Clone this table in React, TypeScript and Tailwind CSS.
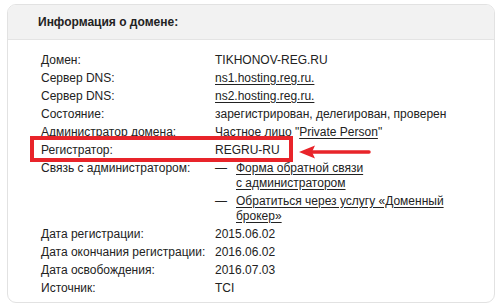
import React from 'react';

type Row = {
    label: string;
    value: React.ReactNode;
    highlight?: boolean;
};

const Ul: React.FC<{ children: React.ReactNode }> = ({ children }) => (
    <a href="#" className="underline underline-offset-[2px] text-[#222]">{children}</a>
);

const rows: Row[] = [
    { label: 'Домен:', value: 'TIKHONOV-REG.RU' },
    { label: 'Сервер DNS:', value: <Ul>ns1.hosting.reg.ru.</Ul> },
    { label: 'Сервер DNS:', value: <Ul>ns2.hosting.reg.ru.</Ul> },
    { label: 'Состояние:', value: 'зарегистрирован, делегирован, проверен' },
    { label: 'Администратор домена:', value: <>Частное лицо "<Ul>Private Person</Ul>"</> },
    { label: 'Регистратор:', value: 'REGRU-RU', highlight: true },
    {
        label: 'Связь с администратором:',
        value: (
            <div className="flex flex-col gap-[3px]">
                <div className="flex">
                    <span className="w-[21px] shrink-0">—</span>
                    <Ul>Форма обратной связи<br />с администратором</Ul>
                </div>
                <div className="flex">
                    <span className="w-[21px] shrink-0">—</span>
                    <Ul>Обратиться через услугу «Доменный<br />брокер»</Ul>
                </div>
            </div>
        ),
    },
    { label: 'Дата регистрации:', value: '2015.06.02' },
    { label: 'Дата окончания регистрации:', value: '2016.06.02' },
    { label: 'Дата освобождения:', value: '2016.07.03' },
    { label: 'Источник:', value: 'TCI' },
];

const ArrowLeft = () => (
    <svg width="72" height="16" viewBox="0 0 72 16" className="absolute left-[258px] top-[3px]">
        <line x1="12" y1="8" x2="70" y2="8" stroke="#e8242a" strokeWidth="3.5" strokeLinecap="round" />
        <path d="M0 8 L16 1.5 L13 8 L16 14.5 Z" fill="#e8242a" />
    </svg>
);

export default function App() {
    return (
        <div className="w-[502px] h-[308px] bg-white pt-[4px] px-[7px] font-['Liberation_Sans',Arial,sans-serif] text-[12px] text-[#222]">
            <div className="w-[488px] h-[299px] border border-[#e2e2e2] rounded-[9px] overflow-hidden">
                <div className="h-[35px] bg-[#f2f2f2] border-b border-[#e4e4e4] pl-[30px] flex items-center">
                    <h2 className="font-bold text-[12px] text-[#222]">Информация о домене:</h2>
                </div>
                <div className="pt-[11px] pl-[33px]">
                    {rows.map((r, i) => (
                        <div key={i} className="relative flex py-[1.5px] leading-[15px]">
                            <div className="w-[174px] shrink-0">{r.label}</div>
                            <div>{r.value}</div>
                            {r.highlight && (
                                <>
                                    <div className="absolute left-[-11px] top-[-5px] w-[263px] h-[26px] border-[4px] border-[#e8242a]" />
                                    <ArrowLeft />
                                </>
                            )}
                        </div>
                    ))}
                </div>
            </div>
        </div>
    );
}
